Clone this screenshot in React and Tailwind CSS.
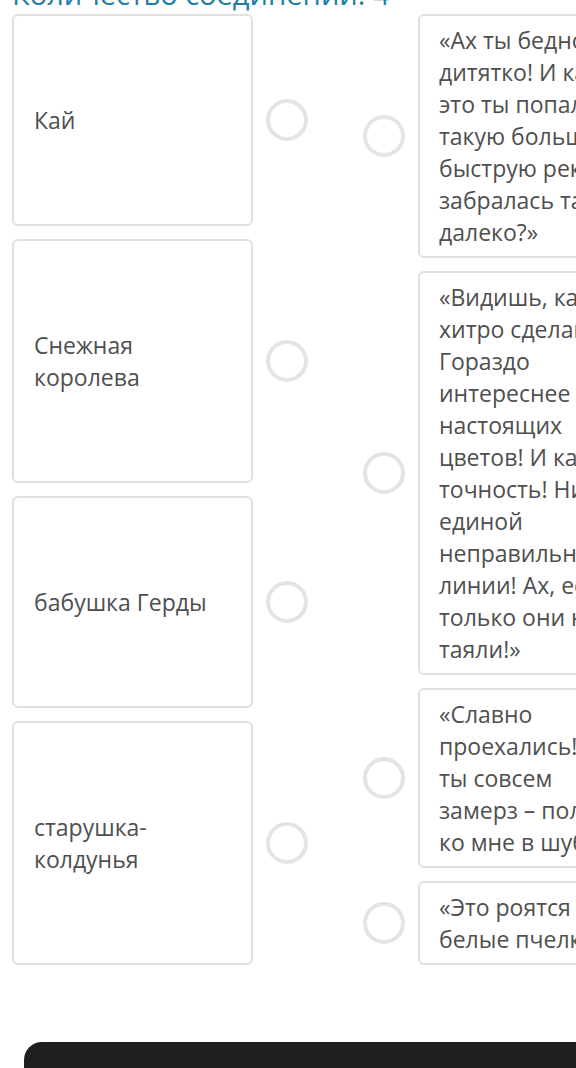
import React from 'react';

const leftItems = ['Кай', 'Снежная королева', 'бабушка Герды', 'старушка-колдунья'];

// строки разбиты так же, как в карточках на экране
const rightItems = [
  ['«Ах ты бедное', 'дитятко! И как', 'это ты попала на', 'такую большую', 'быструю реку да', 'забралась так', 'далеко?»'],
  ['«Видишь, как', 'хитро сделано?', 'Гораздо', 'интереснее', 'настоящих', 'цветов! И какая', 'точность! Ни', 'единой', 'неправильной', 'линии! Ах, если бы', 'только они не', 'таяли!»'],
  ['«Славно', 'проехались! А', 'ты совсем', 'замерз – полезай', 'ко мне в шубу»'],
  ['«Это роятся', 'белые пчелки!»'],
];

const Circle = () => (
  <div className="w-[42px] h-[42px] shrink-0 rounded-full border-[4px] border-[#e4e4e6] bg-white" />
);

const App = () => {
  return (
    <div
      className="w-[576px] h-[1068px] overflow-hidden bg-white"
      style={{ fontFamily: '"Open Sans", "Noto Sans", sans-serif' }}
    >
      <div className="w-[672px] px-[12px]">
        {/* Заголовок, обрезанный сверху */}
        <div className="-mt-[24px] mb-[2px] text-[29px] leading-[36px] text-[#1f7fa6] whitespace-nowrap">
          Количество соединений: 4
        </div>

        {/* Колонки соответствия */}
        <div className="flex items-stretch gap-[55px]">
          <div className="flex flex-col gap-[13px]">
            {leftItems.map((item) => (
              <div key={item} className="flex flex-auto items-center gap-[13px]">
                <div className="w-[241px] self-stretch flex items-center rounded-md border-2 border-[#e0e0e0] px-[20px] py-[8px] text-[23px] leading-[32px] text-[#4f4f4f]">
                  {item}
                </div>
                <Circle />
              </div>
            ))}
          </div>

          <div className="flex flex-col gap-[13px]">
            {rightItems.map((lines) => (
              <div key={lines[0]} className="flex items-center gap-[13px]">
                <Circle />
                <div className="w-[241px] rounded-md border-2 border-[#e0e0e0] px-[19px] py-[8px] text-[23px] leading-[32px] text-[#4f4f4f] whitespace-nowrap">
                  {lines.map((line) => (
                    <div key={line}>{line}</div>
                  ))}
                </div>
              </div>
            ))}
          </div>
        </div>

        {/* Нижняя панель */}
        <div className="mt-[77px] ml-[12px] h-[60px] rounded-t-[18px] bg-[#1f1f1f]" />
      </div>
    </div>
  );
};

export default App;
